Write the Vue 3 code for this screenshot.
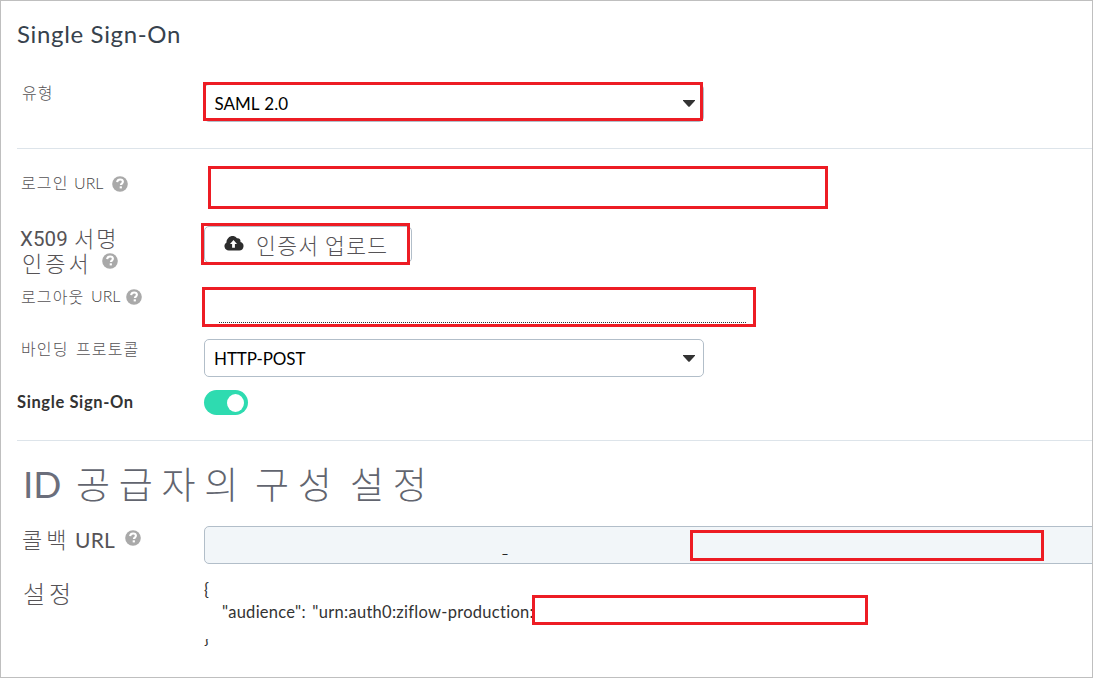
<script setup>
import { h } from 'vue'

const HelpIcon = () =>
  h('svg', { viewBox: '0 0 16 16', width: 16, height: 16, 'aria-hidden': 'true' }, [
    h('circle', { cx: 8, cy: 8, r: 7.8, fill: '#a9a9a9' }),
    h('path', {
      d: 'M5.1 6.1C5.4 4.3 6.5 3.5 8.1 3.5c1.7 0 2.8.9 2.8 2.3 0 1.7-2 1.8-2 3.2',
      fill: 'none',
      stroke: '#fff',
      'stroke-width': 2.1
    }),
    h('rect', { x: 7.7, y: 10.3, width: 2.2, height: 2.1, fill: '#fff' })
  ])
</script>

<template>
  <main class="page">
    <h1 class="title">Single Sign-On</h1>

    <section class="row type">
      <div class="label small"><span class="ko">유형</span></div>
      <div class="select">
        <span class="saml">SAML 2.0</span>
        <svg class="caret" viewBox="0 0 12 7" width="12" height="7"><path d="M0 0h12v.8L6.5 6.8h-1L0 .8z" fill="#333" /></svg>
        <i class="mark mark-type"></i>
      </div>
    </section>

    <section class="row login">
      <div class="label small"><span class="ko w-login">로그인</span><span class="thin w-url1">URL</span><HelpIcon class="help" /></div>
      <div class="blank"><i class="mark mark-login"></i></div>
    </section>

    <section class="row cert">
      <div class="label cert-label">
        <div class="line"><span class="x509">X509</span><span class="ko mid">서명</span></div>
        <div class="line second"><span class="ko mid w-cert">인증서</span><HelpIcon class="help" /></div>
      </div>
      <div class="button">
        <svg class="cloud" viewBox="0 0 20 15" width="20" height="15">
          <path d="M4.8 14.5A4.4 4.4 0 0 1 2.5 6.4 4.7 4.7 0 0 1 3.5 3.1 5.5 5.5 0 0 1 13 2.3c2.2-.5 4 1.2 3.4 3.6a4.4 4.4 0 0 1-1.1 8.6z" fill="#2d2d2d" />
          <path d="M9.5 4 13 8h-2.1v3.8H8.1V8H6z" fill="#fff" />
        </svg>
        <span class="ko upload w-up">인증서</span><span class="ko upload">업로드</span>
        <i class="mark mark-cert"></i>
      </div>
    </section>

    <section class="row logout">
      <div class="label small"><span class="ko w-logout">로그아웃</span><span class="thin w-url2">URL</span><HelpIcon class="help" /></div>
      <div class="blank"><div class="dots"></div><i class="mark mark-logout"></i></div>
    </section>

    <section class="row binding">
      <div class="label small"><span class="ko w-bind">바인딩</span><span class="ko">프로토콜</span></div>
      <div class="select">
        <span class="post">HTTP-POST</span>
        <svg class="caret" viewBox="0 0 12 7" width="12" height="7"><path d="M0 0h12v.8L6.5 6.8h-1L0 .8z" fill="#333" /></svg>
      </div>
    </section>

    <section class="row sso">
      <div class="label sso-label">Single Sign-On</div>
      <div class="toggle"><i></i></div>
    </section>

    <h2 class="idp"><span class="id">ID</span><span class="w-idp">공급자의</span><span class="w-conf">구성</span><span>설정</span></h2>

    <section class="row callback">
      <div class="label"><span class="ko cb w-cb">콜백</span><span class="cb-url">URL</span><HelpIcon class="help" /></div>
      <div class="readonly"><span>_</span><i class="mark mark-callback"></i></div>
    </section>

    <section class="row settings">
      <div class="label"><span class="ko set">설정</span></div>
      <div class="code">
        <div class="brace">{</div>
        <div class="aud">"audience": "urn:auth0:ziflow-production:<i class="mark mark-aud"></i></div>
        <div class="cut"><span>}</span></div>
      </div>
    </section>
  </main>
</template>

<style>
html, body { margin: 0; overflow: hidden; }
</style>

<style scoped>
.page {
  box-sizing: border-box;
  width: 1093px;
  height: 678px;
  padding-left: 16px;
  border: 1px solid #bfbfbf;
  overflow: hidden;
  background: #fff;
  color: #333;
  font-family: Lato, "Noto Sans CJK KR", sans-serif;
}
.title {
  box-sizing: border-box;
  height: 71px;
  margin: 0;
  padding-top: 17px;
  font-size: 24px;
  font-weight: 400;
  line-height: 32px;
  letter-spacing: 0.65px;
  color: #37424d;
}
.row { display: flex; box-sizing: border-box; align-items: flex-start; }
.label {
  display: flex;
  flex: none;
  box-sizing: border-box;
  width: 187px;
  white-space: nowrap;
  color: #565356;
}
.ko { font-family: "Noto Sans CJK KR", sans-serif; font-weight: 300; }
.small { font-size: 16px; line-height: 20px; letter-spacing: 1.1px; padding-left: 4px; }
.thin { font-family: Lato, sans-serif; font-weight: 300; letter-spacing: 0; color: #444; }
.help { flex: none; }
.select, .readonly {
  position: relative;
  display: flex;
  align-items: center;
  box-sizing: border-box;
  width: 500px;
  height: 38px;
  padding: 0 8px 0 9px;
  border: 1px solid #b2bec9;
  border-radius: 5px;
  color: #000;
  font-size: 17px;
}
.caret { margin: 1px 0 0 auto; }
.mark { position: absolute; box-sizing: border-box; border: 3px solid #ed1c24; }
.blank { position: relative; width: 624px; height: 43px; }

.type { height: 77px; padding-top: 12px; border-bottom: 1px solid #dde4ea; }
.type .label { padding: 0 0 0 5px; line-height: 17px; }
.mark-type { left: -2px; top: -3px; width: 500px; height: 39px; }
.saml { padding-left: 0.5px; word-spacing: 1px; }
.post { letter-spacing: -0.1px; }

.login { height: 66px; padding-top: 17px; }
.login .label { padding-top: 7px; }
.login .ko { line-height: 19px; }
.login .help { margin-top: 3px; }
.w-login { width: 53px; }
.w-url1 { width: 38px; }
.mark-login { left: 4px; top: 0; width: 620px; height: 43px; }

.cert { height: 66px; padding-top: 11px; }
.cert-label { flex-direction: column; padding-left: 3px; }
.line { display: flex; height: 24px; line-height: 24px; }
.x509 { width: 54px; padding-top: 1px; font-family: Roboto, sans-serif; font-size: 20.5px; letter-spacing: 0.1px; }
.mid { font-size: 22px; line-height: 23px; letter-spacing: 2px; }
.second { padding-left: 2px; margin-top: 1px; }
.w-cert { width: 80px; letter-spacing: 3px; }
.second .help { margin-top: 2px; }
.button {
  position: relative;
  display: flex;
  align-items: flex-start;
  box-sizing: border-box;
  width: 208px;
  height: 37px;
  padding: 7px 0 0 19px;
  border: 1px solid #b2bec9;
  border-radius: 5px;
  white-space: nowrap;
}
.cloud { flex: none; margin: 2px 12px 0 0; }
.upload { font-size: 21.5px; line-height: 22px; letter-spacing: 1.4px; color: #565356; }
.w-up { width: 69px; }
.mark-cert { left: -4px; top: -4px; width: 209px; height: 42px; }

.logout { height: 52px; padding-top: 6px; }
.logout .label { padding-top: 0; line-height: 18px; }
.logout .help { margin-top: 2px; }
.w-logout { width: 70px; }
.w-url2 { width: 35px; }
.mark-logout { left: -2px; top: 0; width: 554px; height: 40px; }
.dots {
  width: 527px;
  height: 1px;
  margin: 35px 0 0 15px;
  background: repeating-linear-gradient(90deg, #333 0 1px, #fff 1px 2px);
}

.binding { height: 51px; padding-top: 6px; }
.binding .label { line-height: 18px; }
.w-bind { width: 55px; }

.sso { height: 57px; padding-top: 6px; border-bottom: 1px solid #dde4ea; }
.sso-label { font-size: 16.5px; font-weight: 700; line-height: 24px; letter-spacing: 0.62px; color: #333; }
.toggle {
  display: flex;
  align-items: center;
  justify-content: flex-end;
  box-sizing: border-box;
  width: 44px;
  height: 25px;
  padding-right: 4px;
  border-radius: 13px;
  background: #2edbb0;
}
.toggle i { width: 17px; height: 18px; border-radius: 50%; background: #fff; }

.idp {
  display: flex;
  box-sizing: border-box;
  height: 77px;
  margin: 0;
  padding: 18px 0 0 6px;
  font-family: "Noto Sans CJK KR", sans-serif;
  font-size: 37px;
  font-weight: 300;
  line-height: 48px;
  letter-spacing: 8.7px;
  white-space: nowrap;
  color: #62656f;
}
.id { width: 53px; padding-top: 1px; font-family: Lato, sans-serif; font-weight: 400; letter-spacing: 0; color: #6b6e7b; }
.w-idp { width: 179px; }
.w-conf { width: 95px; }

.callback { height: 54px; padding-top: 8px; }
.callback .label { padding: 0 0 0 5px; line-height: 26px; }
.cb { font-size: 22px; line-height: 24px; letter-spacing: 4px; }
.w-cb { width: 53px; }
.cb-url { width: 50px; padding-top: 1px; font-size: 21px; letter-spacing: 0.2px; }
.callback .help { margin-top: 4px; }
.readonly { flex: none; width: 910px; background: #f2f6f9; }
.readonly span { margin: 5px 0 0 288px; font-size: 13px; line-height: 16px; }
.mark-callback { left: 485px; top: 3px; width: 354px; height: 31px; }

.settings { height: 105px; padding-top: 5px; }
.settings .label { padding: 0 0 0 6px; }
.set { font-size: 24px; line-height: 31px; letter-spacing: 4px; }
.code { font-size: 16.5px; line-height: 24px; white-space: nowrap; }
.brace { height: 23px; padding-top: 1px; margin-bottom: -1px; }
.aud { position: relative; padding-left: 18px; letter-spacing: 0.28px; word-spacing: 2px; }
.mark-aud { left: 328px; top: -5px; width: 336px; height: 30px; }
.cut { display: flex; align-items: flex-end; height: 11px; margin-top: 15px; overflow: hidden; }
</style>
